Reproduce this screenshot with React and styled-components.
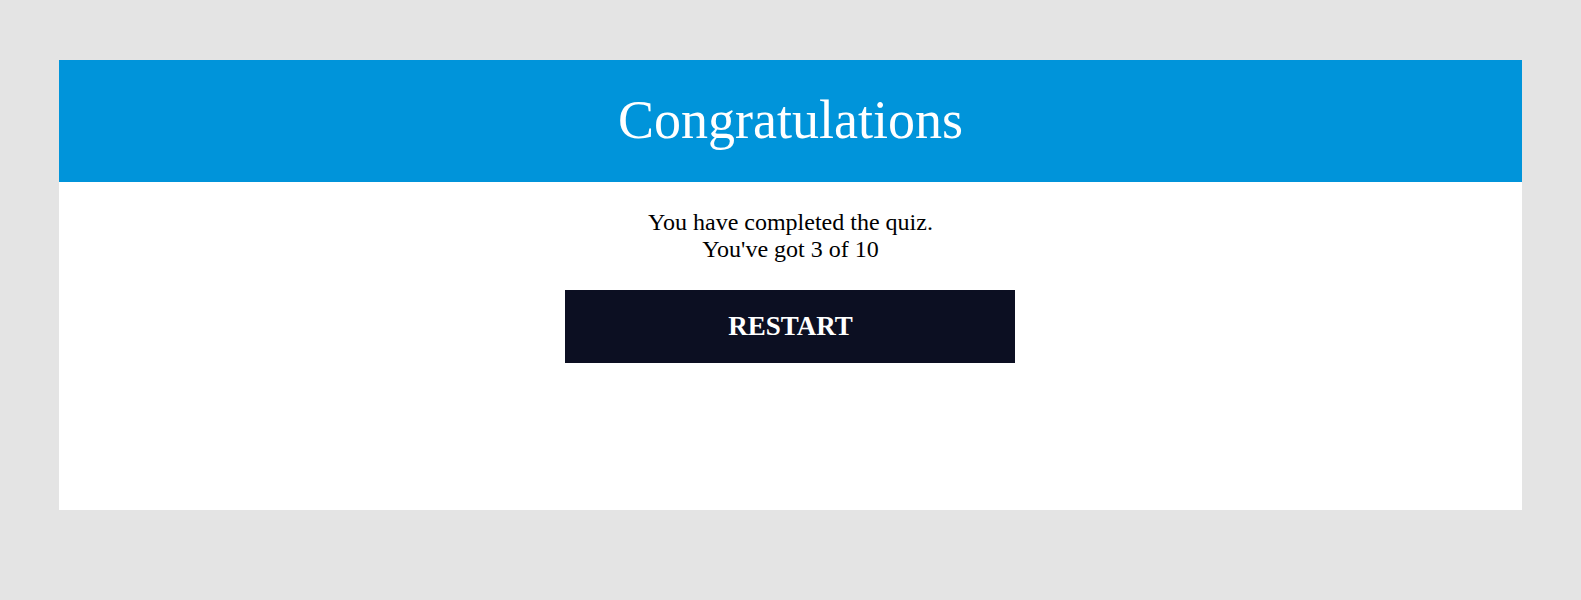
import React from "react";
import styled, { createGlobalStyle } from "styled-components";

const Global = createGlobalStyle`
  html, body { margin: 0; padding: 0; background: #e4e4e4; }
  body { font-family: "Liberation Serif", "Times New Roman", serif; }
`;

const Page = styled.div`
  padding-top: 60px;
  display: flex;
  justify-content: center;
`;

const Card = styled.div`
  width: 92.5%;
  height: 450px;
  background: #ffffff;
  display: flex;
  flex-direction: column;
`;

const Header = styled.div`
  height: 122px;
  background: #0094da;
  display: flex;
  align-items: center;
  justify-content: center;
`;

const Title = styled.h1`
  margin: 0 0 2px;
  color: #ffffff;
  font-weight: 400;
  font-size: 54px;
  line-height: 1;
`;

const Body = styled.div`
  display: flex;
  flex-direction: column;
  align-items: center;
  padding-top: 27px;
`;

const Message = styled.p`
  margin: 0;
  font-size: 24px;
  line-height: normal;
  color: #000;
  text-align: center;
`;

const Button = styled.button`
  margin-top: 27px;
  width: 450px;
  height: 73px;
  padding: 0;
  border: none;
  background: #0c0f22;
  color: #ffffff;
  font-family: "Liberation Serif", "Times New Roman", serif;
  font-weight: 700;
  font-size: 27px;
  cursor: pointer;
`;

export default function App() {
  return (
    <>
      <Global />
      <Page>
        <Card>
          <Header>
            <Title>Congratulations</Title>
          </Header>
          <Body>
            <Message>
              You have completed the quiz.
              <br />
              You've got 3 of 10
            </Message>
            <Button>RESTART</Button>
          </Body>
        </Card>
      </Page>
    </>
  );
}
